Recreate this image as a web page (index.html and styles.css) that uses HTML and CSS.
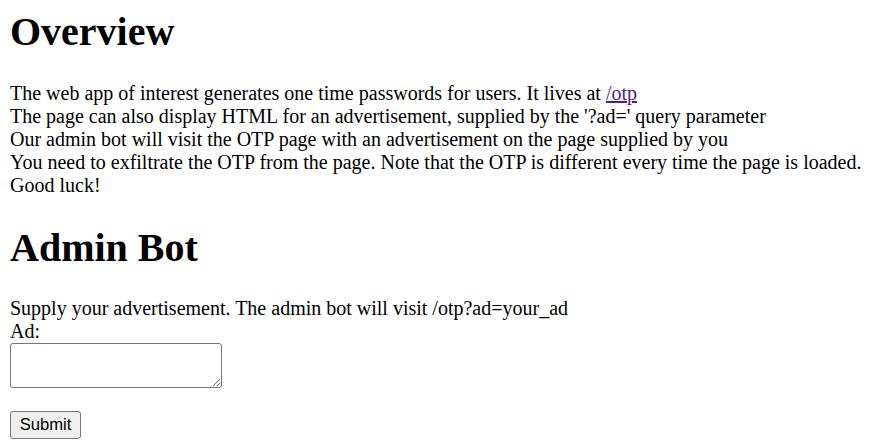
FILE: index.html
```html
<!DOCTYPE html>
<html>
<head>
<meta charset="utf-8">
<title>Overview</title>
<link rel="stylesheet" href="styles.css">
</head>
<body class="page">
<h1 class="title first">Overview</h1>
<p class="text">The web app of interest generates one time passwords for users. It lives at <a class="link" href="/otp">/otp</a><br>
The page can also display HTML for an advertisement, supplied by the '?ad=' query parameter<br>
Our admin bot will visit the OTP page with an advertisement on the page supplied by you<br>
You need to exfiltrate the OTP from the page. Note that the OTP is different every time the page is loaded.<br>
Good luck!</p>
<h1 class="title">Admin Bot</h1>
<form class="form">
<p class="text">Supply your advertisement. The admin bot will visit /otp?ad=your_ad<br>
<label class="label" for="ad">Ad:</label><br>
<textarea class="area" id="ad" name="ad"></textarea></p>
<button class="submit" type="submit">Submit</button>
</form>
</body>
</html>
```
FILE: styles.css
```css
html {
  background: #fff;
}
.page {
  margin: 8px 10px 10px 10px;
  font-family: "Liberation Serif", "Times New Roman", serif;
  font-size: 20px;
  color: #000;
}
.title {
  font-size: 40px;
  font-weight: bold;
  margin: 26.8px 0;
}
.title.first {
  margin-top: 0;
}
.text {
  margin: 20px 0;
}
.link {
  color: #551a8b;
}
.area {
  box-sizing: border-box;
  width: 212px;
  height: 45px;
  border: 1px solid #767676;
  border-radius: 3px;
  padding: 2px;
  margin: 0;
  vertical-align: bottom;
  font-size: 16px;
}
.submit {
  box-sizing: border-box;
  height: 28px;
  width: 71px;
  margin-top: 3px;
  font-family: Arial, "Liberation Sans", sans-serif;
  font-size: 16.6px;
  padding: 0 7px;
  border: 1px solid #767676;
  border-radius: 3px;
  background: #efefef;
  color: #000;
}
```
